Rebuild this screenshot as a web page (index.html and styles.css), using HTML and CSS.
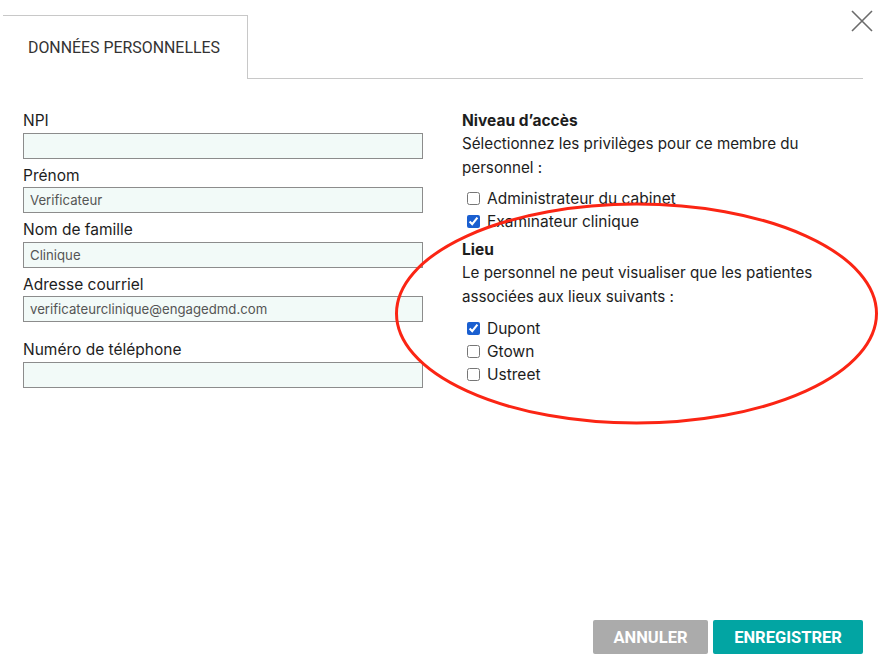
FILE: index.html
```html
<!DOCTYPE html>
<html lang="fr">
<head>
<meta charset="utf-8">
<title>Données personnelles</title>
<link rel="stylesheet" href="styles.css">
</head>
<body>
<div class="modal">
  <div class="tabs">
    <div class="tab">DONNÉES PERSONNELLES</div>
    <div class="tab-rest"></div>
    <button class="close" aria-label="Fermer">
      <svg width="22" height="22" viewBox="0 0 22 22"><path d="M1 1 L21 21 M21 1 L1 21" stroke="#6b6b6b" stroke-width="1.6" fill="none"/></svg>
    </button>
  </div>

  <div class="form">
    <div class="col-left">
      <label class="lbl">NPI</label>
      <input class="field" type="text" value="">
      <label class="lbl">Prénom</label>
      <input class="field" type="text" value="Verificateur">
      <label class="lbl">Nom de famille</label>
      <input class="field" type="text" value="Clinique">
      <label class="lbl">Adresse courriel</label>
      <input class="field" type="text" value="verificateurclinique@engagedmd.com">
      <label class="lbl lbl-gap">Numéro de téléphone</label>
      <input class="field" type="text" value="">
    </div>

    <div class="col-right">
      <div class="heading">Niveau d’accès</div>
      <p class="desc">Sélectionnez les privilèges pour ce membre du personnel :</p>
      <div class="checks">
        <label class="check"><input type="checkbox"><span>Administrateur du cabinet</span></label>
        <label class="check"><input type="checkbox" checked><span>Examinateur clinique</span></label>
      </div>
      <div class="heading heading-lieu">Lieu</div>
      <p class="desc">Le personnel ne peut visualiser que les patientes associées aux lieux suivants :</p>
      <div class="checks checks-lieu">
        <label class="check"><input type="checkbox" checked><span>Dupont</span></label>
        <label class="check"><input type="checkbox"><span>Gtown</span></label>
        <label class="check"><input type="checkbox"><span>Ustreet</span></label>
      </div>
    </div>
  </div>

  <div class="actions">
    <button class="btn btn-cancel">ANNULER</button>
    <button class="btn btn-save">ENREGISTRER</button>
  </div>

  <svg class="annotation" width="881" height="665" viewBox="0 0 881 665">
    <ellipse cx="636.5" cy="313.5" rx="240" ry="109.5" fill="none" stroke="#fb2514" stroke-width="3"/>
  </svg>
</div>
</body>
</html>
```

FILE: styles.css
```css
* { box-sizing: border-box; }

html, body {
  margin: 0;
  padding: 0;
  background: #ffffff;
}

body {
  font-family: "Inter", "Roboto", "Liberation Sans", sans-serif;
  color: #1d1d1d;
  width: 881px;
  height: 665px;
  overflow: hidden;
}

.modal {
  position: relative;
  width: 881px;
  height: 665px;
  padding: 15px 18px 0 3px;
  display: flex;
  flex-direction: column;
}

.tabs {
  display: flex;
  align-items: flex-end;
  height: 64px;
}

.tab {
  width: 245px;
  height: 64px;
  border-top: 1px solid #c8c8c8;
  border-right: 1px solid #c8c8c8;
  padding: 0 0 0 25px;
  display: flex;
  align-items: center;
  font-family: "Roboto", "Liberation Sans", sans-serif;
  font-size: 15.9px;
  color: #333333;
}

.tab-rest {
  flex: 1;
  border-bottom: 1px solid #c8c8c8;
}

.close {
  position: absolute;
  top: 10px;
  right: 8px;
  width: 22px;
  height: 22px;
  padding: 0;
  border: 0;
  background: transparent;
}

.close svg { display: block; }

.form {
  display: flex;
  padding: 25px 0 0 20px;
}

.col-left {
  width: 400px;
  display: flex;
  flex-direction: column;
}

.lbl {
  display: block;
  font-size: 15.5px;
  line-height: 22.5px;
  margin: 6px 0 0;
  color: #1d1d1d;
}

.lbl-gap { margin-top: 17px; }

.field {
  width: 400px;
  height: 26px;
  margin: 0;
  border: 1px solid #8c8c8c;
  background: #f2faf8;
  padding: 0 6px;
  font-family: "Inter", "Roboto", "Liberation Sans", sans-serif;
  font-size: 13.2px;
  color: #555555;
  outline: none;
}

.col-right {
  margin-left: 39px;
  width: 400px;
  padding-top: 4.5px;
}

.heading {
  font-weight: 700;
  font-size: 15.5px;
  line-height: 23.5px;
}

.heading-lieu { margin-top: 4.5px; }

.desc {
  margin: 0;
  font-size: 15.2px;
  line-height: 23.5px;
  max-width: 370px;
}

.checks {
  margin-top: 8px;
  display: flex;
  flex-direction: column;
}

.checks-lieu { margin-top: 9px; }

.check {
  display: flex;
  align-items: center;
  font-size: 15.5px;
  line-height: 23px;
  height: 23px;
}

.check input {
  width: 13px;
  height: 13px;
  margin: 0 7px 0 5px;
  accent-color: #1a5fd0;
}

.actions {
  margin-top: auto;
  display: flex;
  justify-content: flex-end;
  gap: 5px;
  padding-bottom: 11px;
}

.btn {
  height: 34px;
  border: 0;
  border-radius: 2px;
  color: #ffffff;
  font-family: "Roboto", "Liberation Sans", sans-serif;
  font-weight: 700;
  font-size: 16.5px;
  padding: 0;
}

.btn-cancel {
  width: 115px;
  background: #ababab;
}

.btn-save {
  width: 150px;
  background: #02a5a3;
}

.annotation {
  position: absolute;
  left: 0;
  top: 0;
  pointer-events: none;
}
```
